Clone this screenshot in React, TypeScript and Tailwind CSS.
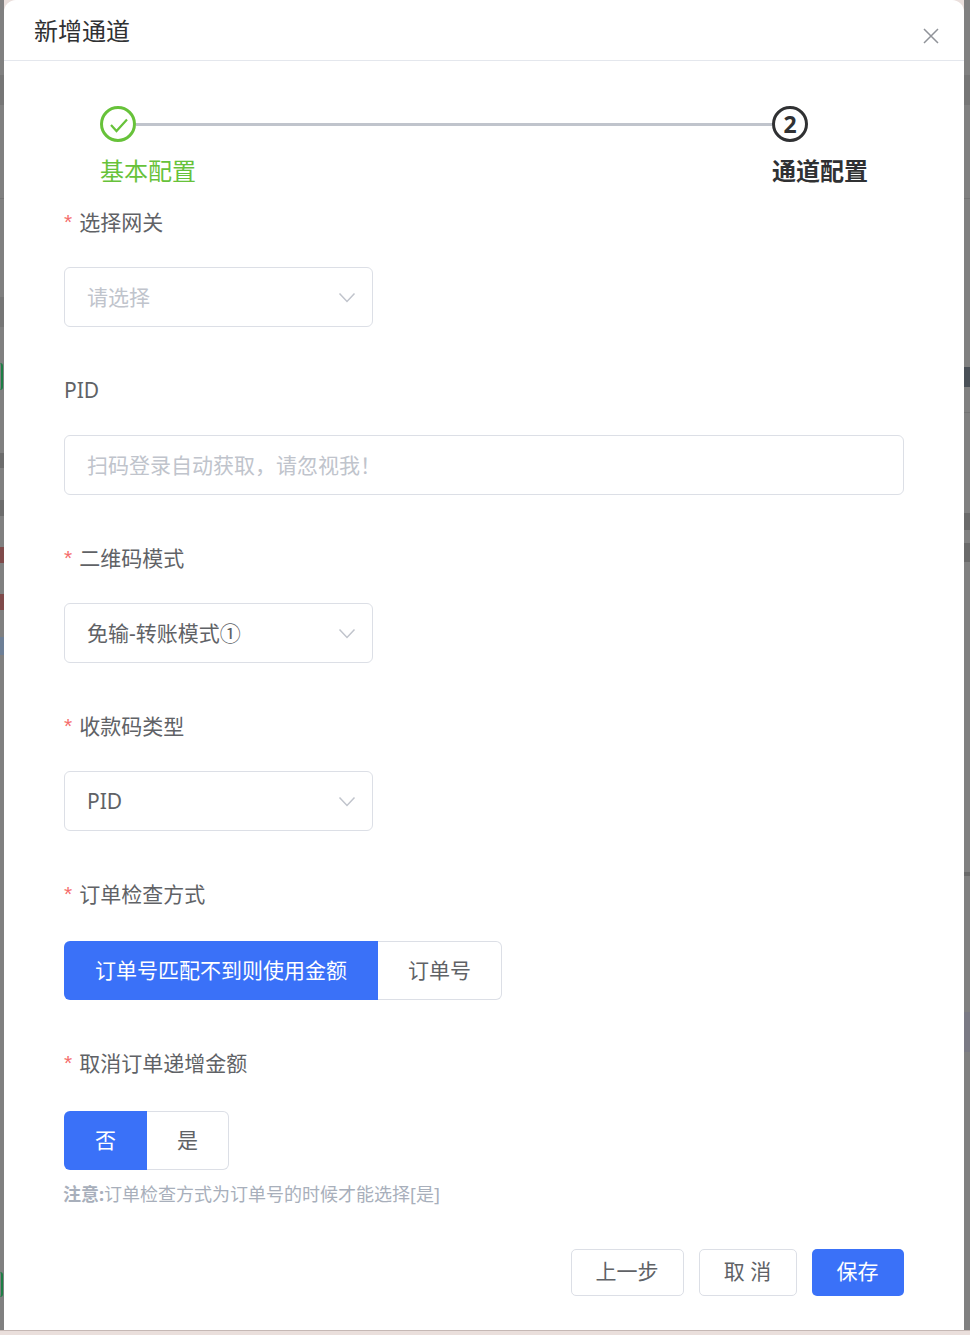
import type { ReactNode } from "react";

const font = "font-['Noto_Sans','Noto_Sans_CJK_SC',sans-serif]";

function Chevron() {
  return (
    <svg className="mt-[2px]" width="18" height="12" viewBox="0 0 18 12" fill="none" stroke="#c0c4cc" strokeWidth="1.5">
      <path d="M1.5 1.5 9 9.5l7.5-8" />
    </svg>
  );
}

function Label({ required = true, children }: { required?: boolean; children: ReactNode }) {
  return (
    <div className={`flex h-[32px] items-center text-[21px] leading-[30px] text-[#606266] ${required ? "pb-[2px]" : ""}`}>
      {required && <span className="mr-[7px] font-['Liberation_Sans'] text-[#f56c6c]">*</span>}
      {children}
    </div>
  );
}

function Select({ value, placeholder }: { value?: string; placeholder?: string }) {
  return (
    <div className="flex h-[60px] w-[309px] items-center justify-between rounded-[6px] border border-[#dcdfe6] pl-[22px] pr-[16px] text-[21px]">
      <span className={`pt-[2px] ${value ? "text-[#606266]" : "text-[#c0c4cc]"}`}>{value ?? placeholder}</span>
      <Chevron />
    </div>
  );
}

function Toggle({ options, widths }: { options: string[]; widths: string[] }) {
  return (
    <div className="flex h-[59px] text-[21px]">
      {options.map((o, i) => (
        <div
          key={o}
          className={
            i === 0
              ? `flex items-center justify-center rounded-l-[6px] bg-[#3a71f8] text-white ${widths[i]}`
              : `flex items-center justify-center rounded-r-[6px] border border-l-0 border-[#dcdfe6] text-[#606266] ${widths[i]}`
          }
        >
          {o}
        </div>
      ))}
    </div>
  );
}

// what shows of the page behind the dialog, at its two edges
function LeftBackdrop() {
  return (
    <div className="flex w-[4px] shrink-0 flex-col bg-[#808080]">
      <div className="mt-[75px] h-[30px] bg-[#767676]" />
      <div className="mt-[93px] h-px bg-[#747474]" />
      <div className="mt-[98px] h-[30px] bg-[#767676]" />
      <div className="mt-[36px] h-[27px] w-[3px] rounded-r-full border-r-[2px] border-[#1c7f45]" />
      <div className="mt-[63px] h-[15px] bg-[#6c6c6c]" />
      <div className="mt-[32px] h-[16px] bg-[#6c6c6c]" />
      <div className="mt-[31px] h-[16px] bg-[#7f4a4a]" />
      <div className="mt-[31px] h-[16px] bg-[#7f4a4a]" />
      <div className="mt-[27px] h-[18px] bg-[#6d7f96]" />
      <div className="mt-[617px] h-[25px] w-[3px] rounded-r-full border-r-[2px] border-[#1c7f45]" />
    </div>
  );
}

function RightBackdrop() {
  return (
    <div className="flex w-[6px] shrink-0 flex-col bg-[#808080]">
      <div className="mt-[75px] h-[30px] bg-[#767676]" />
      <div className="mt-[93px] h-px bg-[#747474]" />
      <div className="mt-[168px] h-[20px] bg-[#4a5057]" />
      <div className="mt-[25px] h-px bg-[#747474]" />
      <div className="mt-[100px] h-[17px] bg-[#6a6a6a]" />
      <div className="mt-[13px] h-[19px] bg-[#6a6a6a]" />
      <div className="mt-[310px] h-[4px] bg-[#6a6a6a]" />
      <div className="mt-[136px] h-[40px] bg-[#7a7a84]" />
    </div>
  );
}

export default function App() {
  return (
    <div className={`h-[1335px] w-[970px] overflow-hidden bg-[#eadfdc] ${font}`}>
      <div className="flex h-[1331px] border-b border-[#c5b8b5]">
        <LeftBackdrop />
        <div className="flex min-w-0 flex-1 flex-col rounded-t-[12px] bg-white">
          <div className="flex h-[61px] shrink-0 items-center justify-between border-b border-[#e4e7ed] pl-[30px] pr-[25px]">
            <h1 className="pt-[2px] text-[24px] leading-[58px] font-normal text-[#303133]">新增通道</h1>
            <svg className="mt-[12px]" width="16" height="16" viewBox="0 0 16 16" stroke="#909399" strokeWidth="1.5">
              <path d="M1 1l14 14M15 1 1 15" />
            </svg>
          </div>

          <div className="px-[60px]">
            {/* steps */}
            <div className="mt-[45px] flex px-[36px]">
              <div className="w-[96px]">
                <div className="flex h-[36px] items-center">
                  <svg width="36" height="36" viewBox="0 0 36 36" fill="none" stroke="#67c23a" className="shrink-0">
                    <circle cx="18" cy="18" r="16.5" strokeWidth="3" />
                    <path d="M11 19l5.5 6L27 13.5" strokeWidth="2.2" />
                  </svg>
                  <div className="h-[3px] flex-1 bg-[#c0c4cc]" />
                </div>
                <div className="mt-[11px] text-[24px] leading-[36px] text-[#67c23a]">基本配置</div>
              </div>
              <div className="mt-[17px] h-[3px] flex-1 bg-[#c0c4cc]" />
              <div className="w-[96px]">
                <div className="flex size-[36px] items-center justify-center rounded-full border-[3px] border-[#303133] text-[23px] leading-none font-bold text-[#303133]">
                  2
                </div>
                <div className="mt-[11px] text-[24px] leading-[36px] font-bold text-[#303133]">通道配置</div>
              </div>
            </div>

            <div className="mt-[18px]">
              <Label>选择网关</Label>
            </div>
            <div className="mt-[28px]">
              <Select placeholder="请选择" />
            </div>

            <div className="mt-[47px]">
              <Label required={false}>PID</Label>
            </div>
            <div className="mt-[29px] flex h-[60px] items-center rounded-[6px] border border-[#dcdfe6] px-[22px] pt-[2px] text-[21px] text-[#c0c4cc]">
              扫码登录自动获取，请忽视我！
            </div>

            <div className="mt-[48px]">
              <Label>二维码模式</Label>
            </div>
            <div className="mt-[28px]">
              <Select value="免输-转账模式①" />
            </div>

            <div className="mt-[48px]">
              <Label>收款码类型</Label>
            </div>
            <div className="mt-[28px]">
              <Select value="PID" />
            </div>

            <div className="mt-[48px]">
              <Label>订单检查方式</Label>
            </div>
            <div className="mt-[30px]">
              <Toggle options={["订单号匹配不到则使用金额", "订单号"]} widths={["w-[314px]", "w-[124px]"]} />
            </div>

            <div className="mt-[48px]">
              <Label>取消订单递增金额</Label>
            </div>
            <div className="mt-[31px]">
              <Toggle options={["否", "是"]} widths={["w-[83px]", "w-[82px]"]} />
            </div>

            <p className="mt-[11px] -ml-px text-[18px] leading-[27px] text-[#a8afbb]">
              <b>注意:</b>订单检查方式为订单号的时候才能选择[是]
            </p>

            <div className="mt-[41px] flex justify-end gap-[15px] text-[21px]">
              <button className="h-[47px] w-[113px] rounded-[5px] border border-[#dcdfe6] pb-[2px] pr-[1px] text-[#606266]">上一步</button>
              <button className="h-[47px] w-[98px] rounded-[5px] border border-[#dcdfe6] pb-[2px] pr-[1px] text-[#606266]">取 消</button>
              <button className="h-[47px] w-[92px] rounded-[5px] bg-[#3a71f8] pb-[2px] pr-[1px] text-white">保存</button>
            </div>
          </div>
        </div>
        <RightBackdrop />
      </div>
    </div>
  );
}
